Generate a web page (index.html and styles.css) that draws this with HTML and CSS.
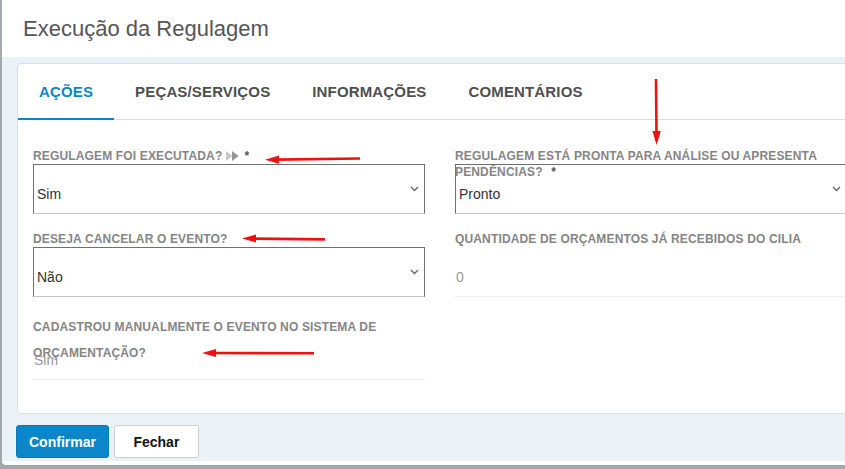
FILE: index.html
```html
<!DOCTYPE html>
<html lang="pt-BR">
<head>
<meta charset="utf-8">
<title>Execução da Regulagem</title>
<link rel="stylesheet" href="styles.css">
</head>
<body>
<div class="modal">
  <header class="modal-header">
    <h1 class="modal-title">Execução da Regulagem</h1>
  </header>

  <div class="modal-body">
    <section class="panel">
      <nav class="tabs">
        <a class="tab active">AÇÕES</a>
        <a class="tab">PEÇAS/SERVIÇOS</a>
        <a class="tab">INFORMAÇÕES</a>
        <a class="tab">COMENTÁRIOS</a>
      </nav>

      <div class="form-grid">
        <div class="field">
          <label class="field-label">REGULAGEM FOI EXECUTADA?<svg class="hint" width="13" height="10" viewBox="0 0 13 10"><path d="M0 0 L6.5 5 L0 10 Z" fill="#c8c8c8"/><path d="M6 0 L12.5 5 L6 10 Z" fill="#949494"/></svg><span class="req">*</span></label>
          <div class="select">
            <span class="select-value">Sim</span>
            <svg class="chevron" width="9" height="6" viewBox="0 0 9 6"><path d="M1 1 L4.5 4.5 L8 1" fill="none" stroke="#666" stroke-width="1.4"/></svg>
          </div>
        </div>

        <div class="field">
          <label class="field-label">REGULAGEM ESTÁ PRONTA PARA ANÁLISE OU APRESENTA PENDÊNCIAS? <span class="req">*</span></label>
          <div class="select">
            <span class="select-value">Pronto</span>
            <svg class="chevron" width="9" height="6" viewBox="0 0 9 6"><path d="M1 1 L4.5 4.5 L8 1" fill="none" stroke="#666" stroke-width="1.4"/></svg>
          </div>
        </div>

        <div class="field">
          <label class="field-label">DESEJA CANCELAR O EVENTO?</label>
          <div class="select">
            <span class="select-value">Não</span>
            <svg class="chevron" width="9" height="6" viewBox="0 0 9 6"><path d="M1 1 L4.5 4.5 L8 1" fill="none" stroke="#666" stroke-width="1.4"/></svg>
          </div>
        </div>

        <div class="field">
          <label class="field-label">QUANTIDADE DE ORÇAMENTOS JÁ RECEBIDOS DO CILIA</label>
          <div class="readonly">0</div>
        </div>

        <div class="field">
          <label class="field-label loose">CADASTROU MANUALMENTE O EVENTO NO SISTEMA DE ORÇAMENTAÇÃO?</label>
          <div class="readonly">Sim</div>
        </div>
      </div>
    </section>

    <footer class="modal-footer">
      <button class="btn btn-primary">Confirmar</button>
      <button class="btn btn-default">Fechar</button>
    </footer>
  </div>
</div>

<svg class="marks" width="845" height="469" viewBox="0 0 845 469">
  <g stroke="#ee1111" stroke-width="2.6" fill="none">
    <line x1="360" y1="158.5" x2="276" y2="159.6"/>
    <line x1="325" y1="239.4" x2="253" y2="238.6"/>
    <line x1="314" y1="353.2" x2="213" y2="353"/>
    <line x1="656" y1="79" x2="656.5" y2="134"/>
  </g>
  <g fill="#ee1111">
    <polygon points="265,159.8 279,155.6 279,163.8"/>
    <polygon points="242,238.5 256,234.4 256,242.6"/>
    <polygon points="202,353 216,348.9 216,357.1"/>
    <polygon points="656.6,145 652.4,131 660.8,131"/>
  </g>
</svg>
</body>
</html>
```

FILE: styles.css
```css
html, body {
  margin: 0;
  height: 100%;
  overflow: hidden;
}

body {
  background: #a3a8ad;
  font-family: "Liberation Sans", Arial, sans-serif;
  position: relative;
}

/* dialog */
.modal {
  margin-left: 2px;
  width: 876px;
  height: 465px;
  padding-bottom: 4px;
  box-sizing: border-box;
  background: #fff;
  border-bottom-left-radius: 4px;
  display: flex;
  flex-direction: column;
}

.modal-header {
  height: 57px;
  padding-left: 21px;
  display: flex;
  align-items: center;
  flex-shrink: 0;
}

.modal-title {
  margin: 0;
  font-size: 22px;
  font-weight: normal;
  color: #555;
}

.modal-body {
  flex: 1;
  background: #eaf2f8;
  padding: 6px 15px 0;
  display: flex;
  flex-direction: column;
}

/* card with tabs */
.panel {
  width: 846px;
  box-sizing: border-box;
  background: #fff;
  border: 1px solid #dcdfe2;
  border-radius: 4px;
  padding-bottom: 33px;
}

.tabs {
  display: flex;
  border-bottom: 1px solid #dedede;
}

.tab {
  position: relative;
  height: 55px;
  line-height: 55px;
  padding: 0 21px;
  font-size: 15px;
  font-weight: bold;
  letter-spacing: 0.15px;
  color: #4f4f4f;
}

.tab.active {
  color: #0b86c8;
}

.tab.active::after {
  content: "";
  position: absolute;
  left: 0;
  right: 0;
  bottom: -1px;
  height: 2px;
  background: #0b86c8;
}

/* form */
.form-grid {
  display: grid;
  grid-template-columns: 392px 392px;
  column-gap: 30px;
  row-gap: 17px;
  padding: 28px 15px 0;
  align-items: start;
}

.field-label {
  display: block;
  height: 16px;
  line-height: 16px;
  font-size: 12px;
  font-weight: bold;
  letter-spacing: 0.15px;
  color: #858585;
}

.field-label.loose {
  line-height: 26px;
}

.hint {
  margin-left: 4px;
  vertical-align: -1px;
}

.req {
  margin-left: 5px;
  color: #555;
}

.select {
  height: 50px;
  box-sizing: border-box;
  border: 1px solid #707070;
  border-bottom-color: #c6c6c6;
  padding: 0 5px 0 3px;
  display: flex;
  align-items: center;
  justify-content: space-between;
  font-size: 14px;
  color: #333;
}

.select-value {
  padding-top: 10px;
  line-height: 18px;
}

.readonly {
  height: 50px;
  box-sizing: border-box;
  border-bottom: 1px solid #eeeeee;
  padding: 21px 0 0 1px;
  line-height: 18px;
  font-size: 14px;
  color: #999;
}

/* footer buttons */
.modal-footer {
  display: flex;
  gap: 5px;
  padding-top: 11px;
  margin-left: -1px;
}

.btn {
  height: 33px;
  min-width: 85px;
  padding: 0 12px;
  border-radius: 3px;
  font-family: inherit;
  font-size: 14px;
  font-weight: bold;
  cursor: pointer;
}

.btn-primary {
  background: #0b86c8;
  border: 1px solid #0a7ab6;
  color: #fff;
}

.btn-default {
  background: #fff;
  border: 1px solid #cfcfcf;
  color: #111;
}

/* red call-outs drawn over the form */
.marks {
  position: absolute;
  top: 0;
  left: 0;
  pointer-events: none;
}
```
